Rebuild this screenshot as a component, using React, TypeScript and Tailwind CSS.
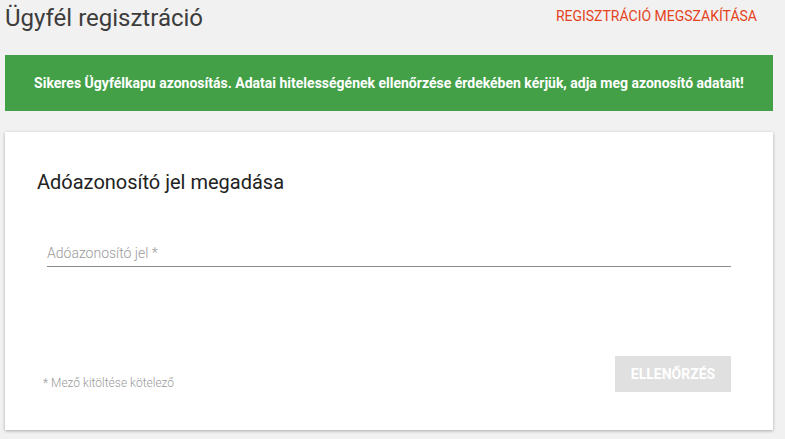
import React from "react";

export default function App() {
  return (
    <div
      className="w-[785px] h-[439px] bg-[#f1f1f1] px-[5px] overflow-hidden"
      style={{ fontFamily: "Roboto, 'Liberation Sans', sans-serif" }}
    >
      <div className="flex items-start justify-between h-[55px]">
        <h1 className="text-[24px] leading-[28px] pt-[4px] text-[#3c3c3c] font-normal">
          Ügyfél regisztráció
        </h1>
        <a className="text-[14px] leading-[16px] mt-[8px] mr-[23px] text-[#e4431d] uppercase">
          REGISZTRÁCIÓ MEGSZAKÍTÁSA
        </a>
      </div>
      <div className="w-[768px] h-[56px] bg-[#43a047] flex items-center justify-center text-white text-[14px] leading-[16px] font-bold">
        Sikeres Ügyfélkapu azonosítás. Adatai hitelességének ellenőrzése érdekében kérjük, adja meg azonosító adatait!
      </div>
      <div className="mt-[21px] w-[768px] h-[298px] bg-white shadow-[0_1px_3px_rgba(0,0,0,0.3)] flex flex-col">
        <h2 className="ml-[32px] mt-[38px] text-[20px] leading-[24px] text-[#222] font-normal">
          Adóazonosító jel megadása
        </h2>
        <div className="ml-[42px] mr-[42px] mt-[51px] border-b border-[#8a8a8a] pb-[5px] text-[14px] leading-[16px] text-[#9a9a9a] font-light">
          Adóazonosító jel *
        </div>
        <div className="flex items-end justify-between ml-[38px] mr-[42px] mt-auto mb-[38px]">
          <div className="text-[12px] leading-[14px] text-[#999] font-light mb-[2px]">* Mező kitöltése kötelező</div>
          <button className="w-[116px] h-[36px] bg-[#e0e0e0] text-white text-[14px] font-bold uppercase">
            ELLENŐRZÉS
          </button>
        </div>
      </div>
    </div>
  );
}
